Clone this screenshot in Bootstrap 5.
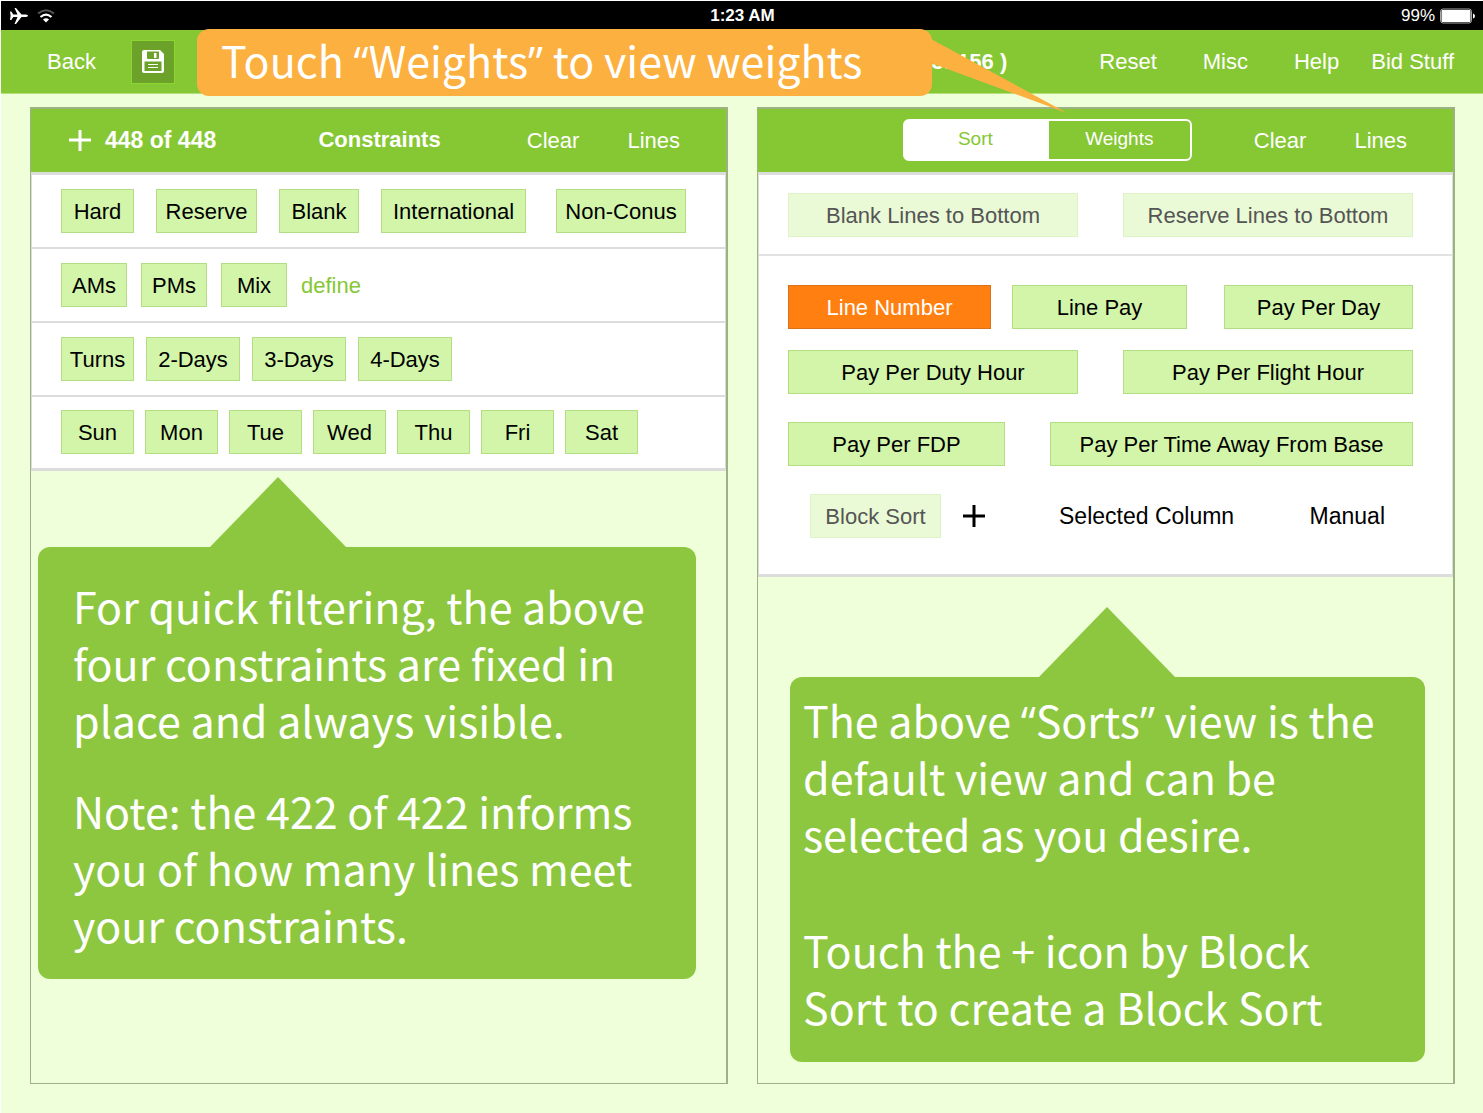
<!DOCTYPE html>
<html lang="en">
<head>
<meta charset="utf-8">
<meta name="viewport" content="width=device-width, initial-scale=1">
<title>Constraints and sorts</title>
<link rel="stylesheet" href="https://cdn.jsdelivr.net/npm/bootstrap@5.3.0/dist/css/bootstrap.min.css">
<style>
body{font-family:"Liberation Sans",Arial,sans-serif;font-size:22px;line-height:26px;color:#000;background:#eeffda;border-top:1px solid #fff;border-left:1px solid #fff}
.status-bar{height:29px;background:#000;color:#fff;font-size:17px;padding:0 7px 0 8px}
.status-bar>div{flex:1 1 0}
.top-bar{height:64px;background:#86c734;border-bottom:1px solid #b5e07c;padding:0 29px 0 46px}
.top-bar a,.panel-head a{color:#fff;text-decoration:none}
.save-btn{width:44px;height:44px;background:#6ca22a;border:1px solid #8bd62f;border-radius:0;margin-left:35px}
.page-title{font-size:22px;line-height:26px;font-weight:700;color:#fff;margin:0 92px 0 auto}
.menu-links{gap:46px}
.menu-links a:last-child{margin-left:-14px}
.banner{position:absolute;left:196px;top:28px;width:735px;height:67px;background:#fcb040;border-radius:12px;color:#fff;font:43px/60px "Noto Sans CJK SC","Noto Sans",sans-serif;padding-left:24px;white-space:nowrap;z-index:2}
.banner svg{position:absolute;left:734px;top:10px}
.quote{font-family:"Open Sans",sans-serif;line-height:1}
.board{gap:29px;padding:13px 28px 29px 29px}
.panel{flex:1 1 0;min-width:0;min-height:977px;border:1px solid #9db284;border-top-width:2px;border-right-width:2px}
.panel-head{height:63px;background:#86c734;color:#fff;padding:0 46px 0 38px}
.panel-body{background:#fff;border:1px solid #dcdcdc;border-width:3px 1px}
.chip-row{height:74px;padding:14px 29px 0;border-bottom:2px solid #dcdcdc}
.chip-row:last-child{height:71px;padding-top:13px;border-bottom:0}
.chip{height:44px;padding:1px 0 0;border:1px solid #b4de86;border-radius:0;background:#d2f5a9;color:#000;font-size:22px;line-height:26px;white-space:nowrap}
.chip:disabled{background:#eafad6;border-color:#def3c6;color:#555;opacity:1}
.chip-on{background:#ff7f11;border-color:#d9701a;color:#fff}
.size-day{width:73px}.size-part{width:66px}.size-trip{width:94px}
.size-reserve{width:101px}.size-blank{width:80px}.size-intl{width:145px}.size-conus{width:130px}
.size-half{width:290px}.size-number{width:203px}.size-pay{width:175px}.size-perday{width:189px}
.size-fdp{width:217px}.size-base{width:363px}.size-block{width:131px}
.space-11{gap:11px}.space-12{gap:12px}.space-14{gap:14px}.space-21{gap:21px}.space-22{gap:22px}
.define-link{color:#86c734;text-decoration:none;padding-top:10px}
.count{font-size:23px;font-weight:700;margin-left:14px;padding-bottom:2px}
.head-title{font-size:22px;line-height:26px;font-weight:700;margin:0;padding-bottom:2px}
.segment{margin:0 62px 2px 0}
.segment .btn{width:145px;height:42px;border:2px solid #fff;border-radius:6px;color:#fff;font-size:19px;line-height:24px;padding:6px 0}
.segment .btn-check:checked+.btn{background:#fff;color:#86c734;border-color:#fff}
.sort-top{height:81px;padding:18px 39px 0 29px;border-bottom:2px solid #e2e2e2}
.sort-list{height:318px;padding:29px 39px 0 29px}
.sort-row{margin-bottom:28px}
.sort-row:first-child{margin-bottom:21px}
.block-row{padding:0 28px 0 22px}
.plain-btn{background:none;border:0;padding:0;color:#000;font-size:23px}
.callout{border-radius:12px;background:#8dc73f;color:#fff;font:43px/57px "Noto Sans CJK SC","Noto Sans",sans-serif}
.callout p{margin:0;white-space:nowrap}
.callout p+p{margin-top:34px}
.callout-left{margin:0 30px 0 7px;height:432px;padding:30px 0 0 35px}
.callout-right{margin:0 28px 0 32px;height:385px;padding:14px 0 0 13px}
.callout-right p+p{margin-top:59px}
.arrow{display:block}
.arrow-left{margin:6px 0 0 179px}
.arrow-right{margin:30px 0 0 281px}
</style>
</head>
<body>
<header class="position-relative">
  <div class="status-bar d-flex align-items-center">
    <div class="d-flex align-items-center gap-2">
      <svg width="20" height="18" viewBox="0 0 20 18" aria-hidden="true"><path d="M1 4.500h1.300l2 3h4.200L5.500 1H7l5.500 6.500H17q2 .4 2 1.200t-2 1.200h-4.500L7 17H5.500l3-7.100H4.300l-2 3H1l.6-4.200z" fill="#fff"/></svg>
      <svg width="18" height="14" viewBox="0 0 18 14" fill="none" aria-hidden="true"><path d="M1 4.500q8-6.500 16 0" stroke="#555" stroke-width="2"/><path d="M3.500 8q5.500-4.600 11 0" stroke="#fff" stroke-width="2.200"/><path d="M6 10.500q3-2.400 6 0L9 13.500z" fill="#fff"/></svg>
    </div>
    <div class="text-center fw-bold">1:23 AM</div>
    <div class="d-flex align-items-center justify-content-end">
      <span>99%</span>
      <svg class="ms-1" width="37" height="16" viewBox="0 0 37 16" aria-hidden="true"><rect x="1.500" y="1" width="31" height="14" rx="2.500" fill="none" stroke="#aaa"/><rect x="2.500" y="2" width="29" height="12" rx="1" fill="#fff"/><path d="M34 5.500q2 .5 2 2.500t-2 2.500z" fill="#fff"/></svg>
    </div>
  </div>
  <nav class="top-bar d-flex align-items-center">
    <a href="#">Back</a>
    <button type="button" class="btn save-btn p-0 d-flex align-items-center justify-content-center" aria-label="Save">
      <svg width="22" height="23" viewBox="0 0 22 23" aria-hidden="true"><path d="M2 0h16l4 4v17q0 2-2 2H2q-2 0-2-2V2q0-2 2-2z" fill="#fff"/><path d="M5 1.500h12V8q0 1-1 1H6Q5 9 5 8z" fill="#6ca22a"/><path d="M12 3h2.500v5H12z" fill="#fff"/><path d="M2.500 11.500h17V21h-17z" fill="#6ca22a"/><path d="M6 14.500h10M6 17.500h10" stroke="#fff"/></svg>
    </button>
    <h1 class="page-title">3: 156 )</h1>
    <div class="menu-links d-flex"><a href="#">Reset</a><a href="#">Misc</a><a href="#">Help</a><a href="#">Bid Stuff</a></div>
  </nav>
  <div class="banner">Touch <span class="quote">“</span>Weights<span class="quote">”</span> to view weights
    <svg width="136" height="75" viewBox="0 0 136 75" aria-hidden="true"><path d="M0 0L136 74L0 24z" fill="#fcb040"/></svg>
  </div>
</header>

<main class="board d-flex">
  <section class="panel">
    <div class="panel-head d-flex align-items-center">
      <svg width="22" height="22" viewBox="0 0 22 22" aria-hidden="true"><path d="M11 0v21M0 10h22" stroke="#fff" stroke-width="3"/></svg>
      <span class="count">448 of 448</span>
      <h2 class="head-title ms-auto me-auto ps-3">Constraints</h2>
      <div class="d-flex gap-5"><a href="#">Clear</a><a href="#">Lines</a></div>
    </div>
    <div class="panel-body">
      <div class="chip-row d-flex space-22">
        <button type="button" class="btn chip size-day">Hard</button>
        <button type="button" class="btn chip size-reserve">Reserve</button>
        <button type="button" class="btn chip size-blank">Blank</button>
        <button type="button" class="btn chip size-intl">International</button>
        <button type="button" class="btn chip size-conus ms-2">Non-Conus</button>
      </div>
      <div class="chip-row d-flex space-14">
        <button type="button" class="btn chip size-part">AMs</button>
        <button type="button" class="btn chip size-part">PMs</button>
        <button type="button" class="btn chip size-part">Mix</button>
        <a href="#" class="define-link">define</a>
      </div>
      <div class="chip-row d-flex space-12">
        <button type="button" class="btn chip size-day">Turns</button>
        <button type="button" class="btn chip size-trip">2-Days</button>
        <button type="button" class="btn chip size-trip">3-Days</button>
        <button type="button" class="btn chip size-trip">4-Days</button>
      </div>
      <div class="chip-row d-flex space-11">
        <button type="button" class="btn chip size-day">Sun</button>
        <button type="button" class="btn chip size-day">Mon</button>
        <button type="button" class="btn chip size-day">Tue</button>
        <button type="button" class="btn chip size-day">Wed</button>
        <button type="button" class="btn chip size-day">Thu</button>
        <button type="button" class="btn chip size-day">Fri</button>
        <button type="button" class="btn chip size-day">Sat</button>
      </div>
    </div>
    <svg class="arrow arrow-left" width="136" height="70" viewBox="0 0 136 70" aria-hidden="true"><path d="M68 0l68 70H0z" fill="#8dc73f"/></svg>
    <div class="callout callout-left">
      <p>For quick filtering, the above<br>four constraints are fixed in<br>place and always visible.</p>
      <p>Note: the 422 of 422 informs<br>you of how many lines meet<br>your constraints.</p>
    </div>
  </section>

  <section class="panel">
    <div class="panel-head d-flex align-items-center justify-content-end">
      <div class="btn-group segment" role="group" aria-label="View">
        <input type="radio" class="btn-check" name="view" id="view-sort" checked>
        <label class="btn" for="view-sort">Sort</label>
        <input type="radio" class="btn-check" name="view" id="view-weights">
        <label class="btn" for="view-weights">Weights</label>
      </div>
      <div class="d-flex gap-5"><a href="#">Clear</a><a href="#">Lines</a></div>
    </div>
    <div class="panel-body">
      <div class="sort-top d-flex justify-content-between">
        <button type="button" class="btn chip size-half" disabled>Blank Lines to Bottom</button>
        <button type="button" class="btn chip size-half" disabled>Reserve Lines to Bottom</button>
      </div>
      <div class="sort-list">
        <div class="sort-row d-flex space-21">
          <button type="button" class="btn chip chip-on size-number">Line Number</button>
          <button type="button" class="btn chip size-pay">Line Pay</button>
          <button type="button" class="btn chip size-perday ms-auto">Pay Per Day</button>
        </div>
        <div class="sort-row d-flex justify-content-between">
          <button type="button" class="btn chip size-half">Pay Per Duty Hour</button>
          <button type="button" class="btn chip size-half">Pay Per Flight Hour</button>
        </div>
        <div class="sort-row d-flex justify-content-between">
          <button type="button" class="btn chip size-fdp">Pay Per FDP</button>
          <button type="button" class="btn chip size-base">Pay Per Time Away From Base</button>
        </div>
        <div class="block-row d-flex align-items-center space-21">
          <button type="button" class="btn chip size-block" disabled>Block Sort</button>
          <button type="button" class="plain-btn d-flex" aria-label="Add block sort"><svg width="24" height="24" viewBox="0 0 24 24" aria-hidden="true"><path d="M12 1v22M1 12h22" stroke="#000" stroke-width="3"/></svg></button>
          <button type="button" class="plain-btn ms-5 ps-1">Selected Column</button>
          <button type="button" class="plain-btn ms-auto">Manual</button>
        </div>
      </div>
    </div>
    <svg class="arrow arrow-right" width="136" height="70" viewBox="0 0 136 70" aria-hidden="true"><path d="M68 0l68 70H0z" fill="#8dc73f"/></svg>
    <div class="callout callout-right">
      <p>The above <span class="quote">“</span>Sorts<span class="quote">”</span> view is the<br>default view and can be<br>selected as you desire.</p>
      <p>Touch the + icon by Block<br>Sort to create a Block Sort</p>
    </div>
  </section>
</main>
<script src="https://cdn.jsdelivr.net/npm/bootstrap@5.3.0/dist/js/bootstrap.bundle.min.js"></script>
</body>
</html>
